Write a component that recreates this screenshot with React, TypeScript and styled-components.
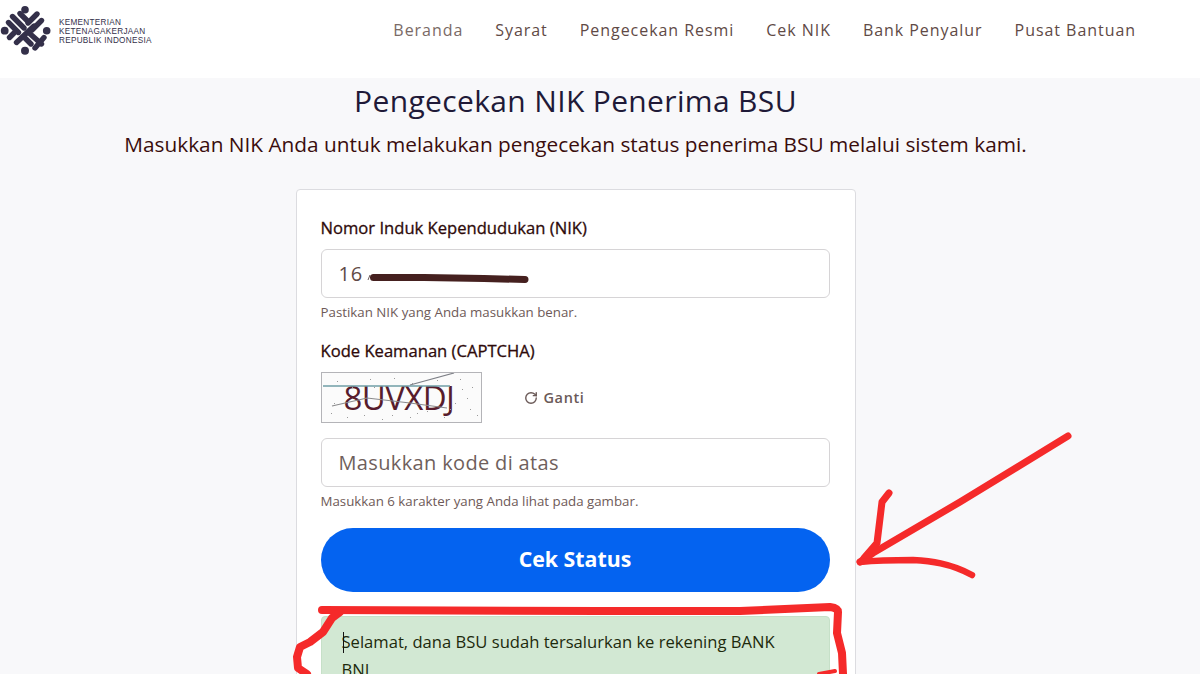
import React from "react";
import styled, { createGlobalStyle } from "styled-components";
import { RotateCw } from "lucide-react";

const Global = createGlobalStyle`
  html, body { margin: 0; padding: 0; height: 674px; overflow: hidden; background: #f8f8fa; }
  body { font-family: "Open Sans", "Noto Sans", sans-serif; color: #3a0d0d; }
  #root { height: 674px; overflow: hidden; }
  * { box-sizing: border-box; }
`;

const Page = styled.div`
  position: relative;
  width: 1200px;
  height: 674px;
  overflow: hidden;
`;

const Header = styled.header`
  height: 78px;
  background: #fff;
  display: flex;
  align-items: flex-start;
  justify-content: space-between;
  padding: 4px 64px 0 0;
`;

const Brand = styled.div`
  display: flex;
  align-items: flex-start;
  gap: 5px;
`;

const BrandText = styled.div`
  font-family: "Liberation Sans", sans-serif;
  font-size: 8.2px;
  line-height: 9px;
  letter-spacing: 0.27px;
  color: #34304a;
  padding-top: 14px;
  white-space: nowrap;
`;

const Nav = styled.nav`
  display: flex;
  gap: 32px;
  padding-top: 17px;
`;

const NavLink = styled.a<{ $active?: boolean }>`
  font-size: 16px;
  line-height: 18px;
  letter-spacing: 0.95px;
  color: ${(p) => (p.$active ? "#7a6a66" : "#5f4a46")};
  white-space: nowrap;
`;

const Main = styled.main`
  display: flex;
  flex-direction: column;
  align-items: center;
  padding-right: 49px;
`;

const Title = styled.h1`
  margin: 4px 0 0;
  font-size: 30px;
  line-height: 38px;
  font-weight: 400;
  letter-spacing: 0.35px;
  color: #1f1a38;
`;

const Lead = styled.p`
  margin: 10px 0 0;
  font-size: 20.8px;
  line-height: 28px;
  color: #3a0d0d;
  white-space: nowrap;
`;

const Card = styled.section`
  margin-top: 31px;
  width: 560px;
  background: #fff;
  border: 1px solid #dcdce0;
  border-radius: 4px;
  padding: 27px 25px 0 24px;
`;

const Label = styled.label`
  display: block;
  font-size: 16.6px;
  line-height: 22px;
  font-weight: 500;
  color: #2e0a0a;
  -webkit-text-stroke: 0.3px #2e0a0a;
`;

const InputBox = styled.div<{ $mt?: number }>`
  margin-top: ${(p) => p.$mt ?? 10}px;
  height: 49px;
  border: 1px solid #d6d4d6;
  border-radius: 6px;
  background: #fff;
  display: flex;
  align-items: center;
  padding-left: 17px;
  position: relative;
`;

const InputValue = styled.span`
  font-size: 20px;
  letter-spacing: 0.8px;
  color: #5f4a46;
`;

const Placeholder = styled.span`
  font-size: 20px;
  letter-spacing: 0.35px;
  color: #6f5f5c;
`;

const Redaction = styled.svg`
  position: absolute;
  left: 42px;
  top: 18px;
`;

const Help = styled.p<{ $mb: number }>`
  margin: 5px 0 ${(p) => p.$mb}px;
  font-size: 13.3px;
  line-height: 18px;
  color: #6e5a58;
`;

const CaptchaRow = styled.div`
  display: flex;
  align-items: center;
  gap: 42px;
  margin-top: 10px;
  margin-bottom: 15px;
`;

const CaptchaBox = styled.div`
  width: 161px;
  height: 51px;
  border: 1px solid #b4b4b8;
  background: #fbfbfb;
  position: relative;
  overflow: hidden;
`;

const CaptchaText = styled.span`
  position: absolute;
  left: 22px;
  top: 2px;
  font-size: 33px;
  line-height: 46px;
  letter-spacing: -0.6px;
  color: #571c2c;
`;

const CaptchaLines = styled.svg`
  position: absolute;
  inset: 0;
`;

const Refresh = styled.span`
  display: inline-flex;
  align-items: center;
  gap: 6px;
  font-size: 14.5px;
  font-weight: 600;
  letter-spacing: 0.6px;
  color: #6b5a58;
`;

const Submit = styled.button`
  display: block;
  width: 100%;
  height: 64px;
  margin-top: 0;
  padding: 0 0 3px;
  border: 0;
  border-radius: 32px;
  background: #0463f0;
  color: #fff;
  font-family: inherit;
  font-size: 21.3px;
  font-weight: 700;
`;

const Alert = styled.div`
  margin-top: 24px;
  height: 90px;
  background: #d2e8d3;
  border: 1px solid #c6e0c8;
  border-radius: 4px;
  padding: 11px 50px 0 20px;
  font-size: 16.6px;
  line-height: 28px;
  color: #1d2a0c;
  position: relative;
`;

const Caret = styled.span`
  position: absolute;
  left: 21px;
  top: 15px;
  width: 1px;
  height: 21px;
  background: #111;
`;

const Annotations = styled.svg`
  position: absolute;
  inset: 0;
  pointer-events: none;
`;

const Logo = () => (
  <svg width="54" height="54" viewBox="0 0 54 54">
    <g fill="#34304a">
      <circle cx="25" cy="5.7" r="3.8" />
      <circle cx="25" cy="46.7" r="4" />
      <circle cx="4.7" cy="26.7" r="3.9" />
      <circle cx="46.7" cy="26.7" r="3.8" />
    </g>
    <g stroke="#34304a" strokeWidth="5.4" strokeLinecap="round" fill="none">
      <path d="M12.5 12.5 L24 24" />
      <path d="M20 9.5 L27 16.5" />
      <path d="M37 10 L28 19" />
      <path d="M41.5 16.5 L32 26" />
      <path d="M8.5 18.5 L18.5 28.5" />
      <path d="M9.5 33.5 L15 28" />
      <path d="M16.5 38.5 L34 22" />
      <path d="M35 44 L44 33.5" />
      <path d="M28 28 L41.5 40" />
      <path d="M24 33 L31 40" />
    </g>
  </svg>
);

const specks = [
  [15, 8], [30, 14], [48, 6], [72, 5], [90, 10], [115, 7], [138, 6], [150, 14], [12, 30], [9, 40],
  [25, 44], [42, 42], [60, 46], [88, 44], [105, 38], [122, 44], [133, 30], [148, 36], [155, 42], [140, 16],
  [128, 36], [95, 40], [70, 42], [52, 14], [145, 25],
];

const navItems = ["Beranda", "Syarat", "Pengecekan Resmi", "Cek NIK", "Bank Penyalur", "Pusat Bantuan"];

export default function App() {
  return (
    <Page>
      <Global />
      <Header>
        <Brand>
          <Logo />
          <BrandText>
            KEMENTERIAN
            <br />
            KETENAGAKERJAAN
            <br />
            REPUBLIK INDONESIA
          </BrandText>
        </Brand>
        <Nav>
          {navItems.map((item, i) => (
            <NavLink key={item} $active={i === 0}>
              {item}
            </NavLink>
          ))}
        </Nav>
      </Header>
      <Main>
        <Title>Pengecekan NIK Penerima BSU</Title>
        <Lead>Masukkan NIK Anda untuk melakukan pengecekan status penerima BSU melalui sistem kami.</Lead>
        <Card>
          <Label>Nomor Induk Kependudukan (NIK)</Label>
          <InputBox>
            <InputValue>16</InputValue>
            <Redaction width="170" height="18" viewBox="0 0 170 18">
              <path d="M4 12 L6 7" stroke="#6a5a58" strokeWidth="1" />
              <path d="M9.5 9.5 L60 9.5 L120 10.5 L161 11.5" stroke="#45201f" strokeWidth="7" strokeLinecap="round" fill="none" />
            </Redaction>
          </InputBox>
          <Help $mb={19}>Pastikan NIK yang Anda masukkan benar.</Help>
          <Label>Kode Keamanan (CAPTCHA)</Label>
          <CaptchaRow>
            <CaptchaBox>
              <CaptchaText>8UVXDJ</CaptchaText>
              <CaptchaLines width="159" height="49" viewBox="0 0 159 49">
                <path d="M1 13 L128 13" stroke="#6f9ea6" strokeWidth="1.6" />
                <path d="M88 12 L132 0" stroke="#7d7f86" strokeWidth="1.2" />
                <path d="M10 33 L45 25 L88 30 L125 35" stroke="#8a8a8c" strokeWidth="1.2" fill="none" />
                {specks.map(([x, y]) => (
                  <rect key={`${x}-${y}`} x={x} y={y} width="1" height="1" fill="#9a9a9a" />
                ))}
              </CaptchaLines>
            </CaptchaBox>
            <Refresh>
              <RotateCw size={14} strokeWidth={2.4} />
              Ganti
            </Refresh>
          </CaptchaRow>
          <InputBox $mt={0}>
            <Placeholder>Masukkan kode di atas</Placeholder>
          </InputBox>
          <Help $mb={18}>Masukkan 6 karakter yang Anda lihat pada gambar.</Help>
          <Submit>Cek Status</Submit>
          <Alert>
            <Caret />
            Selamat, dana BSU sudah tersalurkan ke rekening BANK BNI.
          </Alert>
        </Card>
      </Main>
      <Annotations width="1200" height="674" viewBox="0 0 1200 674">
        <g fill="none" stroke="#f52a2a" strokeLinecap="round" strokeLinejoin="round">
          <path d="M1068 436 L960 502 L873 553 L860 562" strokeWidth="7" />
          <path d="M889 493 L882 502 L877 543 L864 558" strokeWidth="7" />
          <path d="M860 562 C880 560 913 560 913 560 C930 561 950 563 972 575" strokeWidth="6.5" />
          <path d="M322 610 L600 611 L740 611 L830 607 Q838 608 838 612 L837 633 L842 653 L843 674" strokeWidth="8" />
          <path d="M340 612 L332 618 L323 632 L310 642 L300 647 L297 657 L298 668 L307 674" strokeWidth="8" />
          <path d="M819 674 L835 671" strokeWidth="4" />
        </g>
      </Annotations>
    </Page>
  );
}
